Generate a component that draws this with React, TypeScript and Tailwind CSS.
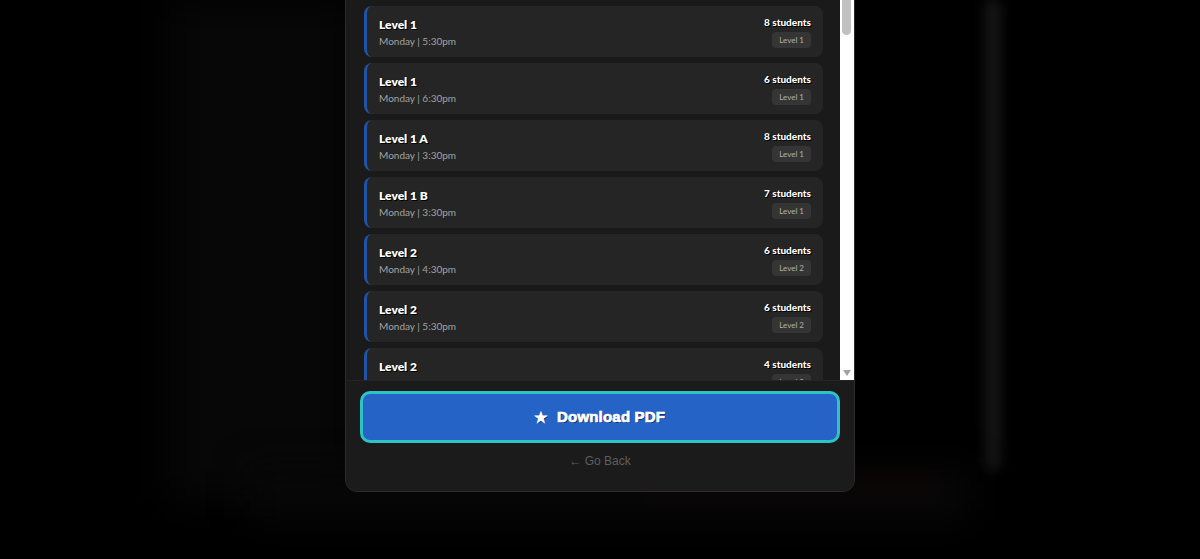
import React from "react";

type Cls = { title: string; time: string; students: number; level: string };

const classes: Cls[] = [
  { title: "Level 1", time: "Monday | 5:30pm", students: 8, level: "Level 1" },
  { title: "Level 1", time: "Monday | 6:30pm", students: 6, level: "Level 1" },
  { title: "Level 1 A", time: "Monday | 3:30pm", students: 8, level: "Level 1" },
  { title: "Level 1 B", time: "Monday | 3:30pm", students: 7, level: "Level 1" },
  { title: "Level 2", time: "Monday | 4:30pm", students: 6, level: "Level 2" },
  { title: "Level 2", time: "Monday | 5:30pm", students: 6, level: "Level 2" },
  { title: "Level 2", time: "Monday | 6:30pm", students: 4, level: "Level 2" },
];

const shadow = { textShadow: "1px 1px 0 #000, 0 0 1px #000" };

function Card({ c }: { c: Cls }) {
  return (
    <div className="flex h-[51px] shrink-0 items-start justify-between rounded-lg border-l-[3px] border-[#2153a6] bg-[#252525] pl-[12px] pr-[12px] pt-[11px]">
      <div className="flex flex-col">
        <div className="text-[12px] font-extrabold leading-[16px] text-white" style={shadow}>
          {c.title}
        </div>
        <div className="mt-[1px] text-[10px] leading-[14px] text-[#a3a3a3]">{c.time}</div>
      </div>
      <div className="mt-[-1px] flex flex-col items-end">
        <div className="text-[10px] font-black leading-[12px] text-white" style={shadow}>
          {c.students} students
        </div>
        <div className="mt-[4px] flex h-[16px] items-center rounded-[4px] bg-[#353535] px-[7px] text-[8px] leading-[10px] text-[#b0b0b0]">
          {c.level}
        </div>
      </div>
    </div>
  );
}

export default function App() {
  return (
    <div
      className="relative h-[559px] w-[1200px] overflow-hidden bg-black"
      style={{ fontFamily: "Lato, 'Noto Sans', sans-serif" }}
    >
      {/* background decorations */}
      <div className="pointer-events-none absolute left-[170px] top-0 h-[500px] w-[180px] bg-[#070707] blur-[20px]" />
      <div className="pointer-events-none absolute left-[985px] top-0 h-[470px] w-[16px] bg-[#151515] blur-[6px]" />
      <div className="pointer-events-none absolute left-[640px] top-[478px] h-[24px] w-[300px] bg-[#1c0405] blur-[10px]" />
      <div className="pointer-events-none absolute left-[250px] top-[470px] h-[50px] w-[720px] bg-[#070707] blur-[18px]" />

      <div className="relative flex justify-center">
        <div className="mt-[-20px] flex w-[510px] flex-col overflow-hidden rounded-xl border border-[#2c2c2c] bg-[#1b1b1b]">
          {/* scroll area */}
          <div className="relative h-[399px] overflow-hidden bg-[#1a1a1a]">
            <div className="mt-[-32px] flex flex-col gap-[6px] pl-[18px] pr-[31px]">
              <div className="h-[51px] shrink-0 rounded-lg border-l-[3px] border-[#2153a6] bg-[#252525]" />
              {classes.map((c, i) => (
                <Card key={i} c={c} />
              ))}
            </div>
            {/* scrollbar */}
            <div className="absolute right-0 top-0 h-full w-[14px] bg-white">
              <div className="absolute left-[2px] top-0 h-[54px] w-[9px] rounded-full bg-[#c1c1c1]" />
              <div className="absolute bottom-[4px] left-[3px] h-0 w-0 border-x-[4px] border-t-[6px] border-x-transparent border-t-[#a3a3a3]" />
            </div>
          </div>
          {/* footer */}
          <div className="flex flex-col items-center border-t border-[#252525] bg-[#1b1b1b] px-[14px] pb-[22px] pt-[10px]">
            <button
              className="flex h-[52px] w-full items-center justify-center gap-[10px] rounded-[10px] border-[3px] border-[#2ec4c7] bg-[#2563c6] text-[15px] font-bold text-white"
              style={{
                fontFamily: "'Liberation Sans', sans-serif",
                textShadow: "1px 1px 0 #0b2a66",
                WebkitTextStroke: "0.7px #fff",
                letterSpacing: "0.2px",
              }}
            >
              <span className="text-[13px] leading-none">★</span>
              <span>Download PDF</span>
            </button>
            <div
              className="mt-[10px] text-[12px] leading-[16px] text-[#5e5e5e]"
              style={{ fontFamily: "'Liberation Sans', sans-serif" }}
            >
              ← Go Back
            </div>
          </div>
        </div>
      </div>
    </div>
  );
}
